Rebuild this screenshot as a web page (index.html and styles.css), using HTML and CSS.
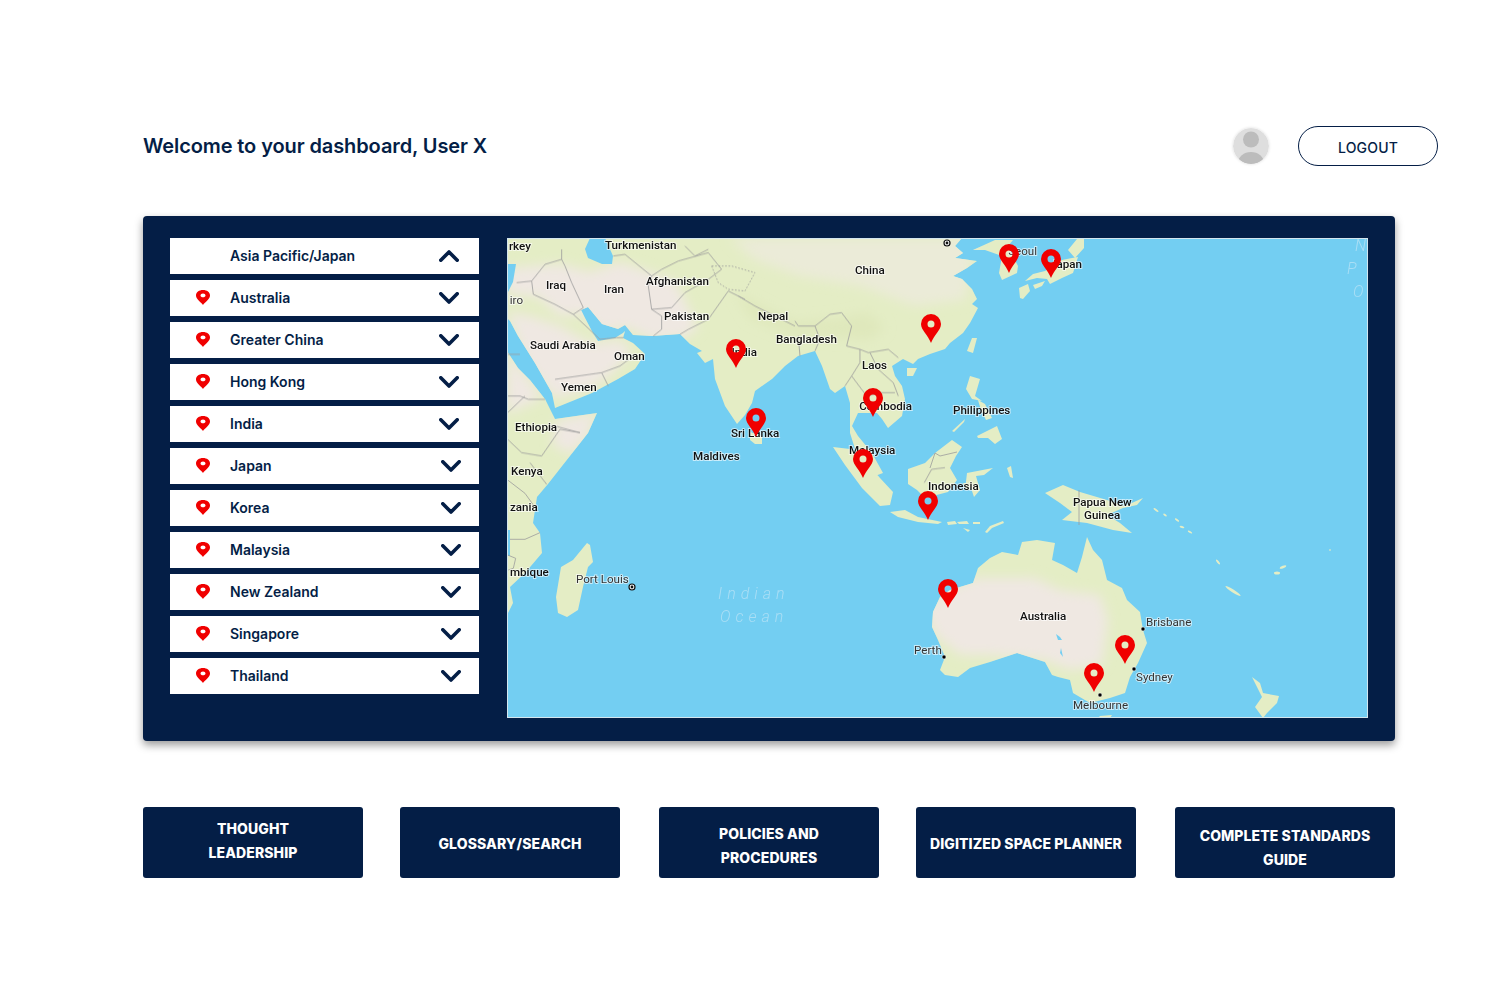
FILE: index.html
```html
<!DOCTYPE html>
<html lang="en">
<head>
  <meta charset="UTF-8">
  <meta name="viewport" content="width=device-width, initial-scale=1.0">
  <title>Dashboard</title>
  <link rel="stylesheet" href="styles.css">
</head>
<body>

  <!-- shared icons -->
  <svg class="icon-defs" aria-hidden="true">
    <symbol id="row-pin" viewBox="0 0 14 15">
      <path fill-rule="evenodd" d="M7 15C5.5 12.4 0 9.4 0 5.4 0 2.2 3 0 7 0s7 2.2 7 5.4C14 9.4 8.500 12.400 7 15ZM7 3.500c-1.400 0-2.500.8-2.500 1.900S5.600 7.300 7 7.300s2.500-.8 2.500-1.900S8.400 3.500 7 3.500Z"/>
    </symbol>
    <symbol id="chevron-down" viewBox="0 0 20 12">
      <path d="M1.800 1.800 10 10l8.200-8.200"/>
    </symbol>
    <symbol id="chevron-up" viewBox="0 0 20 12">
      <path d="M1.800 10.200 10 2l8.200 8.200"/>
    </symbol>
  </svg>

  <header class="top-bar">
    <h1>Welcome to your dashboard, User X</h1>
    <svg class="avatar" viewBox="0 0 36 36" aria-label="User">
      <defs><clipPath id="avatar-clip"><circle cx="18" cy="18" r="18"/></clipPath></defs>
      <circle cx="18" cy="18" r="18" fill="#dedede"/>
      <g clip-path="url(#avatar-clip)" fill="#bcbcbc">
        <circle cx="18" cy="11.500" r="8"/>
        <ellipse cx="18" cy="35" rx="13" ry="11"/>
      </g>
    </svg>
    <button class="logout-btn">LOGOUT</button>
  </header>

  <main class="map-panel">
    <!-- Region list -->
    <ul class="region-list">
      <li class="region"><span class="region-name region-head">Asia Pacific/Japan</span><svg class="chevron"><use href="#chevron-up"/></svg></li>
      <li class="region"><svg class="row-pin"><use href="#row-pin"/></svg><span class="region-name">Australia</span><svg class="chevron"><use href="#chevron-down"/></svg></li>
      <li class="region"><svg class="row-pin"><use href="#row-pin"/></svg><span class="region-name">Greater China</span><svg class="chevron"><use href="#chevron-down"/></svg></li>
      <li class="region"><svg class="row-pin"><use href="#row-pin"/></svg><span class="region-name">Hong Kong</span><svg class="chevron"><use href="#chevron-down"/></svg></li>
      <li class="region"><svg class="row-pin"><use href="#row-pin"/></svg><span class="region-name">India</span><svg class="chevron"><use href="#chevron-down"/></svg></li>
      <li class="region"><svg class="row-pin"><use href="#row-pin"/></svg><span class="region-name">Japan</span><svg class="chevron"><use href="#chevron-down"/></svg></li>
      <li class="region"><svg class="row-pin"><use href="#row-pin"/></svg><span class="region-name">Korea</span><svg class="chevron"><use href="#chevron-down"/></svg></li>
      <li class="region"><svg class="row-pin"><use href="#row-pin"/></svg><span class="region-name">Malaysia</span><svg class="chevron"><use href="#chevron-down"/></svg></li>
      <li class="region"><svg class="row-pin"><use href="#row-pin"/></svg><span class="region-name">New Zealand</span><svg class="chevron"><use href="#chevron-down"/></svg></li>
      <li class="region"><svg class="row-pin"><use href="#row-pin"/></svg><span class="region-name">Singapore</span><svg class="chevron"><use href="#chevron-down"/></svg></li>
      <li class="region"><svg class="row-pin"><use href="#row-pin"/></svg><span class="region-name">Thailand</span><svg class="chevron"><use href="#chevron-down"/></svg></li>
    </ul>

    <!-- Map: coordinates are page pixels so the viewBox starts at the map corner -->
    <div class="map-frame">
      <svg class="map" viewBox="508 239 859 478">
        <defs>
          <path id="land" d="M507 238H962L955 246 963 253 955 258 977 261 967 268 953 276 962 279 972 289 977 299 972 304 978 308 970 323 963 333 950 343 945 349 930 354 918 359 913 364 903 359 892 366 895 376 902 386 905 399 902 416 888 428 882 419 877 413 858 413 852 426 858 436 872 453 883 473 875 476 866 464 856 452 850 433 850 403 845 386 835 393 830 389 822 366 815 351 798 356 785 366 772 379 755 391 752 403 745 415 737 424 725 406 715 379 713 359 705 363 697 353 702 351 690 344 680 334 652 336 633 335 625 325 618 329 602 324 588 307 581 310 585 318 593 333 598 341 615 338 623 333 625 331 623 338 633 343 645 354 635 369 618 379 592 393 555 408 552 393 535 363 518 336 510 321 507 318Z
            M507 351 518 368 530 380 545 399 555 419 597 413 588 433 548 484 537 497 533 523 540 533 542 553 525 573 510 587 513 603 507 615Z
            M933 612 940 597 950 590 973 583 978 568 990 558 1002 552 1018 555 1022 542 1037 540 1055 543 1052 560 1063 565 1077 573 1082 557 1087 537 1093 550 1102 560 1107 580 1122 588 1127 600 1140 612 1143 630 1147 643 1138 663 1130 677 1125 693 1110 698 1090 703 1073 693 1070 680 1058 677 1052 675 1045 662 1017 653 990 662 970 668 958 677 945 675 940 670 945 657 938 640 932 627Z
            M1100 716 1112 715 1110 718 1098 718Z
            M1252 677 1260 683 1263 693 1279 696 1277 703 1267 713 1263 718 1255 707 1262 697Z
            M1045 493 1063 485 1080 492 1107 500 1125 506 1143 498 1137 505 1123 508 1107 515 1120 523 1132 533 1113 530 1087 523 1062 520 1072 512 1060 503Z
            M833 447 850 449 865 460 880 478 893 492 890 505 880 506 862 488 845 465Z
            M890 512 905 510 918 517 942 522 938 524 918 522 898 517Z
            M947 522 955 521 957 524 948 525ZM957 522 967 521 969 524 959 524ZM973 522 980 522 980 524 973 524ZM963 528 970 530 968 532ZM985 532 990 526 1003 521 1004 523 992 528 987 533Z
            M952 440 962 447 956 456 950 468 957 480 948 492 925 498 917 490 908 484 908 469 925 463 935 453Z
            M967 473 993 468 984 475 976 476 980 490 974 497 971 488 965 490Z
            M1007 468 1011 466 1013 478 1010 477ZM963 483 966 483 970 490 966 490Z
            M970 376 980 379 975 396 982 401 972 399 966 389ZM978 400 985 404 992 418 986 420 981 410ZM977 436 997 426 1002 439 995 444 988 438 978 438ZM952 431 965 419 964 422 954 432Z
            M972 338 977 338 973 353 967 351ZM907 368 917 368 913 376 907 376Z
            M973 250 995 240 1013 240 1008 246 1018 266 1017 273 1002 280 999 273 1002 256 985 250Z
            M1025 281 1033 274 1045 271 1053 266 1062 260 1072 258 1078 257 1073 273 1062 278 1050 284 1047 279 1037 278ZM1068 250 1077 239 1084 239 1084 248 1075 258ZM1019 288 1028 284 1030 291 1023 299 1020 298ZM1033 285 1045 281 1042 286 1035 289Z
            M587 543 590 545 593 562 588 567 583 587 578 610 567 617 558 613 556 597 561 567 573 560Z
            M750 432 762 436 762 444 755 444 750 440Z"/>
          <clipPath id="land-clip"><use href="#land"/></clipPath>
          <filter id="soft" x="-20%" y="-20%" width="140%" height="140%"><feGaussianBlur stdDeviation="6"/></filter>
          <filter id="edge" x="-2%" y="-2%" width="104%" height="104%"><feGaussianBlur stdDeviation="0.500"/></filter>
          <path id="pin" fill-rule="evenodd" d="M0 0C-3-8-10-13-10-19A10 10 0 1 1 10-19C10-13 3-8 0 0ZM0-22.500A3.500 3.500 0 1 0 0-15.500 3.500 3.500 0 1 0 0-22.500Z"/>
        </defs>

        <rect class="sea" x="507" y="238" width="861" height="480"/>
        <g filter="url(#edge)">
          <use href="#land" class="land"/>

          <!-- desert and highland tints -->
          <g clip-path="url(#land-clip)">
            <g filter="url(#soft)">
              <g class="desert">
                <path d="M507 268 560 264 590 272 620 262 650 272 676 282 698 328 684 338 652 340 628 328 600 332 585 314 560 316 538 297 507 294Z"/>
                <path d="M507 312 530 316 560 326 590 343 622 340 632 352 612 374 590 389 555 399 525 362Z"/>
                <path d="M507 350 522 370 542 398 507 414Z"/>
                <path d="M556 420 597 412 588 438 570 454 552 444Z"/>
                <path d="M925 610 945 590 975 578 1035 578 1060 590 1100 595 1108 620 1102 665 1070 670 1045 660 990 655 960 655 935 635Z"/>
              </g>
              <path class="plateau" d="M730 238H975L965 300 915 306 860 286 800 276 755 260Z"/>
              <path class="highland" d="M735 292 760 305 795 322 840 318 868 312 885 328 870 340 840 338 790 335 750 318Z"/>
            </g>
          </g>

          <!-- inland water -->
          <g class="sea">
            <path d="M590 238H605L613 256 612 264 602 264 588 258 585 249Z"/>
            <path d="M508 264 516 264 513 282 507 294Z"/>
            <path d="M1056 634 1060 637 1062 640 1058 640ZM1061 648 1063 657 1060 653Z"/>
            <path d="M508 530 510 530 510 556 508 556Z"/>
          </g>

          <!-- small islands -->
          <g class="land">
            <ellipse cx="1233" cy="591" rx="9" ry="1.500" transform="rotate(33 1233 591)"/>
            <ellipse cx="1218" cy="562" rx="3" ry="1"  transform="rotate(50 1218 562)"/>
            <ellipse cx="1277" cy="573" rx="3" ry="1.500"/>
            <ellipse cx="1283" cy="567" rx="3.500" ry="1.200" transform="rotate(-20 1283 567)"/>
            <ellipse cx="1156" cy="510" rx="3" ry="1" transform="rotate(35 1156 510)"/>
            <ellipse cx="1165" cy="515" rx="2" ry="1" transform="rotate(35 1165 515)"/>
            <ellipse cx="1177" cy="520" rx="2.500" ry="1" transform="rotate(35 1177 520)"/>
            <ellipse cx="1182" cy="527" rx="2.500" ry="1" transform="rotate(20 1182 527)"/>
            <ellipse cx="1190" cy="532" rx="2.500" ry="1" transform="rotate(30 1190 532)"/>
            <ellipse cx="1330" cy="550" rx="1" ry=".8"/>
          </g>
        </g>

        <!-- borders -->
        <g transform="translate(505 236) scale(.3333)" class="borders">
          <path d="M120 85 170 70 180 90 200 140 235 215M120 85 80 135 85 175 150 205 205 235 235 215M35 140 80 135"/>
          <path d="M170 40 170 70M325 60 360 55 440 120 470 100 520 75 610 50 650 100M540 30 570 60 610 40M440 120 430 150 440 220 470 240 470 280 445 300"/>
          <path d="M440 220 500 215 540 170 610 130 650 100M525 295 550 280 610 250 670 165 720 190"/>
          <path d="M700 180 750 210 870 270M870 255 880 270 930 270 975 235 1010 230 1040 270 1025 330 1065 340 1090 350 1150 340 1180 365"/>
          <path d="M880 300 885 360M930 345 945 310 930 270M1065 340 1065 380 1040 420 1020 450M1095 350 1120 400 1165 440 1180 480M1085 480 1130 470 1170 470M1040 420 1085 480"/>
          <path d="M205 235 285 310 335 305 355 305M150 430 290 410 345 390 385 360M290 410 310 450"/>
          <path d="M8 480 45 480 70 490 120 490M8 530 60 480M8 610 50 650 110 660 165 580 225 590 150 570M75 680 125 745"/>
          <path class="dotted" d="M620 90 640 140 670 160 720 165 750 110 680 90 620 90"/>
          <path d="M8 355 45 355"/>
          <path d="M1258 740 1280 700 1320 695"/>
        </g>
        <g transform="translate(505 480) scale(.3333)" class="borders">
          <path d="M8 0 60 40 85 75M15 178 60 178 105 158M8 225 32 235 25 265 10 270"/>
        </g>
        <path class="borders-page" d="M1079 490V525"/>
        <path class="borders-page" d="M930 468 935 453 940 456 957 452"/>

        <!-- labels -->
        <g class="labels">
          <text x="509" y="250">rkey</text>
          <text x="605" y="249">Turkmenistan</text>
          <text x="546" y="289">Iraq</text>
          <text x="604" y="293">Iran</text>
          <text x="646" y="285">Afghanistan</text>
          <text x="664" y="320">Pakistan</text>
          <text x="758" y="320">Nepal</text>
          <text x="855" y="274">China</text>
          <text x="776" y="343">Bangladesh</text>
          <text x="757" y="356" text-anchor="end">India</text>
          <text x="530" y="349">Saudi Arabia</text>
          <text x="614" y="360">Oman</text>
          <text x="561" y="391">Yemen</text>
          <text x="862" y="369">Laos</text>
          <text x="912" y="410" text-anchor="end">Cambodia</text>
          <text x="953" y="414">Philippines</text>
          <text x="731" y="437">Sri Lanka</text>
          <text x="693" y="460">Maldives</text>
          <text x="849" y="454">Malaysia</text>
          <text x="515" y="431">Ethiopia</text>
          <text x="511" y="475">Kenya</text>
          <text x="510" y="511">zania</text>
          <text x="510" y="576">mbique</text>
          <text x="928" y="490">Indonesia</text>
          <text x="1073" y="506">Papua New</text>
          <text x="1084" y="519">Guinea</text>
          <text x="1020" y="620">Australia</text>
          <text x="1082" y="268" text-anchor="end">Japan</text>
        </g>
        <g class="labels cities">
          <text x="523" y="304" text-anchor="end">iro</text>
          <text x="1037" y="255" text-anchor="end">Seoul</text>
          <text x="576" y="583">Port Louis</text>
          <text x="1146" y="626">Brisbane</text>
          <text x="914" y="654">Perth</text>
          <text x="1136" y="681">Sydney</text>
          <text x="1073" y="709">Melbourne</text>
        </g>
        <g class="sea-labels">
          <text x="718" y="599">Indian</text>
          <text x="720" y="622">Ocean</text>
        </g>
        <g class="sea-labels edge-labels">
          <text x="1355" y="251">N</text>
          <text x="1347" y="274">P</text>
          <text x="1353" y="297">O</text>
        </g>

        <!-- city dots -->
        <g class="city-dot">
          <circle cx="944" cy="657" r="2"/>
          <circle cx="1143" cy="629" r="2"/>
          <circle cx="1134" cy="669" r="2"/>
          <circle cx="1100" cy="695" r="2"/>
        </g>
        <g class="capital">
          <circle cx="632" cy="587" r="3"/>
          <circle cx="947" cy="243" r="3"/>
        </g>
        <g class="capital-dot">
          <circle cx="632" cy="587" r="1.400"/>
          <circle cx="947" cy="243" r="1.400"/>
        </g>

        <!-- pins -->
        <g class="map-pins">
          <use href="#pin" x="736" y="368"/>
          <use href="#pin" x="756" y="437"/>
          <use href="#pin" x="873" y="417"/>
          <use href="#pin" x="863" y="478"/>
          <use href="#pin" x="931" y="343"/>
          <use href="#pin" x="1009" y="273"/>
          <use href="#pin" x="1051" y="278"/>
          <use href="#pin" x="928" y="520"/>
          <use href="#pin" x="948" y="608"/>
          <use href="#pin" x="1125" y="664"/>
          <use href="#pin" x="1094" y="692"/>
        </g>
      </svg>
    </div>
  </main>

  <!-- Bottom links -->
  <nav class="link-row">
    <a class="link-btn link-thought">THOUGHT<br>LEADERSHIP</a>
    <a class="link-btn link-glossary">GLOSSARY/SEARCH</a>
    <a class="link-btn link-policies">POLICIES AND<br>PROCEDURES</a>
    <a class="link-btn link-planner">DIGITIZED SPACE PLANNER</a>
    <a class="link-btn link-standards">COMPLETE STANDARDS<br>GUIDE</a>
  </nav>

</body>
</html>
```

FILE: styles.css
```css
/* Global styles */
body {
  font-family: Inter, "Liberation Sans", sans-serif;
  background-color: #fff;
  color: #041e46;
  margin: 0;
  padding-top: 126px;
}

.icon-defs {
  width: 0;
  height: 0;
  display: block;
}

/* Top bar */
.top-bar {
  display: flex;
  align-items: center;
  height: 40px;
  padding: 0 74px 0 143px;
}

.top-bar h1 {
  margin: 0 auto 0 0;
  font-size: 20px;
  font-weight: 600;
  letter-spacing: -0.1px;
}

.avatar {
  width: 36px;
  height: 36px;
  margin-right: 29px;
  border-radius: 50%;
  box-shadow: 0 0 3px rgba(0, 0, 0, 0.15);
}

.logout-btn {
  width: 140px;
  height: 40px;
  padding: 2px 0 0;
  font-family: inherit;
  font-size: 14px;
  font-weight: 500;
  letter-spacing: 0.2px;
  color: #041e46;
  background: #fff;
  border: 1px solid #041e46;
  border-radius: 20px;
}

/* Map panel */
.map-panel {
  display: flex;
  gap: 28px;
  width: 1252px;
  height: 525px;
  box-sizing: border-box;
  margin: 50px 0 0 143px;
  padding: 22px 27px 23px;
  background-color: #041e46;
  border-radius: 4px;
  box-shadow: 0 4px 8px rgba(0, 0, 0, 0.4);
}

/* Region list */
.region-list {
  display: flex;
  flex-direction: column;
  gap: 6px;
  width: 309px;
  margin: 0;
  padding: 0;
  list-style: none;
}

.region {
  display: flex;
  align-items: center;
  height: 36px;
  padding-left: 26px;
  background-color: #fff;
}

.row-pin {
  width: 14px;
  height: 15px;
  margin-right: 20px;
  margin-top: -2px;
  fill: #f00000;
}

.region-name {
  margin-top: -2px;
  font-size: 14px;
  font-weight: 600;
}

.region-head {
  margin-left: 34px;
}

.chevron {
  width: 20px;
  height: 12px;
  margin-left: auto;
  margin-right: 20px;
  fill: none;
  stroke: #041e46;
  stroke-width: 3.600px;
  stroke-linecap: round;
  stroke-linejoin: round;
}

.region:nth-child(n+6) .chevron {
  margin-right: 18px;
}

/* Map */
.map-frame {
  width: 861px;
  height: 480px;
  box-sizing: border-box;
  border: 1px solid #d4e6ee;
}

.map {
  display: block;
  width: 859px;
  height: 478px;
}

.sea {
  fill: #73cef2;
}

.land {
  fill: #e4edc5;
}

.desert {
  fill: #efe8e2;
}

.plateau {
  fill: #ebebd8;
}

.highland {
  fill: #dfe8bc;
}

.borders {
  fill: none;
  stroke: #9c9c9c;
  stroke-width: 2.400px;
}

.borders .dotted {
  stroke-dasharray: 5 5;
}

.borders-page {
  fill: none;
  stroke: #9c9c9c;
  stroke-width: 0.800px;
}

.labels text {
  font-family: Roboto, "Liberation Sans", sans-serif;
  font-size: 11.600px;
  font-weight: 500;
  fill: #111;
  stroke: rgba(255, 255, 255, 0.6);
  stroke-width: 2px;
  paint-order: stroke;
}

.labels.cities text {
  font-weight: 400;
  fill: #333;
}

.sea-labels text {
  font-family: Roboto, "Liberation Sans", sans-serif;
  font-size: 16px;
  font-style: italic;
  font-weight: 300;
  letter-spacing: 5px;
  fill: #a9def5;
}

.edge-labels text {
  letter-spacing: 0;
}

.city-dot {
  fill: #000;
  stroke: #fff;
  stroke-width: 0.500px;
}

.capital {
  fill: #fff;
  stroke: #111;
  stroke-width: 1.200px;
}

.capital-dot {
  fill: #111;
}

.map-pins {
  fill: #f00000;
}

/* Bottom links */
.link-row {
  display: flex;
  gap: 37px;
  margin: 66px 0 0 143px;
}

.link-btn {
  display: flex;
  align-items: center;
  justify-content: center;
  width: 220px;
  height: 71px;
  box-sizing: border-box;
  font-size: 14px;
  font-weight: 800;
  line-height: 24px;
  letter-spacing: 0.1px;
  text-align: center;
  color: #fff;
  background-color: #041e46;
  border-radius: 3px;
}

.link-policies, .link-standards {
  margin-left: 2px;
}

.link-thought {
  padding-bottom: 3px;
}

.link-glossary, .link-planner {
  padding-top: 3px;
}

.link-policies {
  padding-top: 6px;
}

.link-standards {
  padding-top: 10px;
}
```
